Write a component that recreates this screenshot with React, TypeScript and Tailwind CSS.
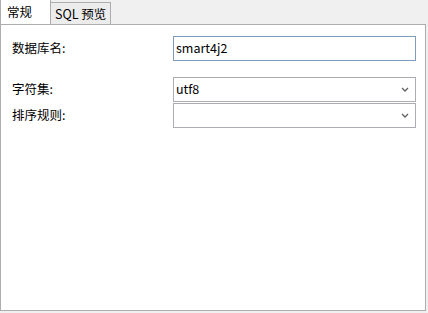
const font = { fontFamily: '"Microsoft YaHei", "Noto Sans CJK SC", "Noto Sans", sans-serif' };

function Chevron() {
  return (
    <svg width="8" height="5" viewBox="0 0 8 5" className="shrink-0">
      <path d="M1 1 L4 4 L7 1" fill="none" stroke="#606060" strokeWidth="1.3" />
    </svg>
  );
}

function Select({ value }: { value: string }) {
  return (
    <div className="w-[243px] h-[25px] border border-[#abadb3] bg-white flex items-center justify-between pl-[2px] pr-[6px] text-[12.5px] text-black">
      <span>{value}</span>
      <Chevron />
    </div>
  );
}

export default function App() {
  return (
    <div className="w-[428px] h-[313px] bg-[#f0f0f0] text-[12.5px] text-black" style={font}>
      <div className="flex items-end h-[24px]">
        <div className="h-[25px] w-[51px] bg-white border-l border-t border-r border-[#adadad] px-[6px] pt-[3px] relative z-10">常规</div>
        <div className="h-[22px] w-[60px] bg-[#ececec] border-t border-r border-[#adadad] px-[4px] pt-[2px] whitespace-nowrap">SQL 预览</div>
      </div>
      <div className="w-[426px] h-[287px] bg-white border border-[#adadad] pt-[11px] pl-[11px]">
        <div className="flex items-center h-[25px]">
          <span className="w-[161px]">数据库名:</span>
          <div className="w-[243px] h-[25px] border border-[#7f9db9] bg-white flex items-center pl-[2px]">smart4j2</div>
        </div>
        <div className="flex items-center h-[25px] mt-[16px]">
          <span className="w-[161px]">字符集:</span>
          <Select value="utf8" />
        </div>
        <div className="flex items-center h-[25px] mt-px">
          <span className="w-[161px]">排序规则:</span>
          <Select value="" />
        </div>
      </div>
    </div>
  );
}
